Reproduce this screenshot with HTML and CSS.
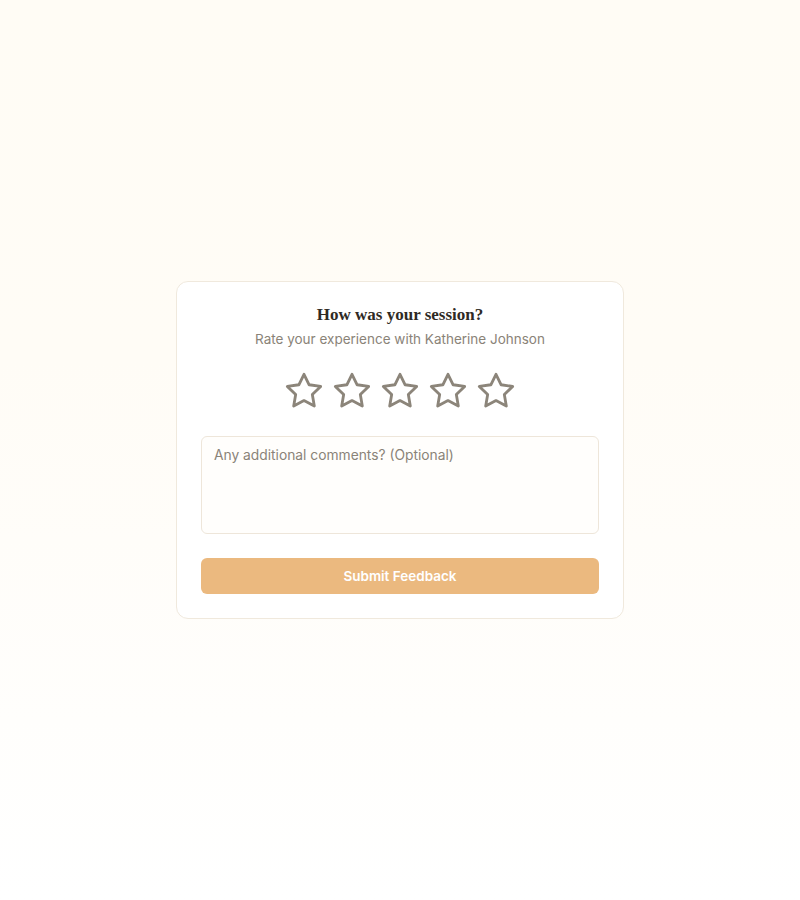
FILE: index.html
```html
<!DOCTYPE html>
<html lang="en">
<head>
<meta charset="utf-8">
<title>Feedback</title>
<link rel="stylesheet" href="styles.css">
</head>
<body>
<main class="page">
  <section class="card">
    <h1 class="title">How was your session?</h1>
    <p class="subtitle">Rate your experience with Katherine Johnson</p>
    <div class="stars">
      <button class="star" type="button" aria-label="1 star"><svg viewBox="0 0 24 24" width="40" height="40"><polygon points="12 2 15.09 8.26 22 9.27 17 14.14 18.18 21.02 12 17.77 5.82 21.02 7 14.14 2 9.27 8.91 8.26 12 2"/></svg></button>
      <button class="star" type="button" aria-label="2 stars"><svg viewBox="0 0 24 24" width="40" height="40"><polygon points="12 2 15.09 8.26 22 9.27 17 14.14 18.18 21.02 12 17.77 5.82 21.02 7 14.14 2 9.27 8.91 8.26 12 2"/></svg></button>
      <button class="star" type="button" aria-label="3 stars"><svg viewBox="0 0 24 24" width="40" height="40"><polygon points="12 2 15.09 8.26 22 9.27 17 14.14 18.18 21.02 12 17.77 5.82 21.02 7 14.14 2 9.27 8.91 8.26 12 2"/></svg></button>
      <button class="star" type="button" aria-label="4 stars"><svg viewBox="0 0 24 24" width="40" height="40"><polygon points="12 2 15.09 8.26 22 9.27 17 14.14 18.18 21.02 12 17.77 5.82 21.02 7 14.14 2 9.27 8.91 8.26 12 2"/></svg></button>
      <button class="star" type="button" aria-label="5 stars"><svg viewBox="0 0 24 24" width="40" height="40"><polygon points="12 2 15.09 8.26 22 9.27 17 14.14 18.18 21.02 12 17.77 5.82 21.02 7 14.14 2 9.27 8.91 8.26 12 2"/></svg></button>
    </div>
    <textarea class="comments" placeholder="Any additional comments? (Optional)"></textarea>
    <button class="submit" type="button">Submit Feedback</button>
  </section>
</main>
</body>
</html>
```
FILE: styles.css
```css
* { box-sizing: border-box; }
html, body { margin: 0; padding: 0; }
body {
  background: linear-gradient(180deg, #fffcf5 0%, #fffcf6 40%, #ffffff 100%);
  min-height: 100vh;
  font-family: "Inter", "DejaVu Sans", sans-serif;
  color: #3a352e;
}
.page {
  min-height: 100vh;
  display: flex;
  align-items: center;
  justify-content: center;
}
.card {
  width: 448px;
  background: #ffffff;
  border: 1px solid #f0e9dd;
  border-radius: 12px;
  padding: 23px 24px 24px;
  display: flex;
  flex-direction: column;
  align-items: stretch;
}
.title {
  margin: 0;
  font-family: "Liberation Serif", "DejaVu Serif", serif;
  font-weight: 700;
  font-size: 17px;
  line-height: 20px;
  text-align: center;
  color: #2f2a24;
}
.subtitle {
  margin: 4px 0 0;
  font-size: 13.5px;
  line-height: 20px;
  text-align: center;
  color: #8a8378;
}
.stars {
  margin-top: 18px;
  display: flex;
  justify-content: center;
}
.star {
  width: 48px;
  height: 48px;
  padding: 4px;
  border: 0;
  background: none;
  cursor: pointer;
  display: flex;
  align-items: center;
  justify-content: center;
}
.star svg {
  display: block;
  fill: none;
  stroke: #8c857a;
  stroke-width: 1.7;
  stroke-linejoin: round;
  stroke-linecap: round;
}
.comments {
  margin-top: 21px;
  width: 100%;
  height: 98px;
  padding: 8px 12px;
  border: 1px solid #eee6da;
  border-radius: 6px;
  background: #fffefc;
  font-family: inherit;
  font-size: 13.8px;
  line-height: 20px;
  color: #3a352e;
  resize: none;
  outline: none;
}
.comments::placeholder { color: #8a8378; }
.submit {
  margin-top: 24px;
  height: 36px;
  width: 100%;
  border: 0;
  border-radius: 6px;
  background: #ebb97f;
  color: #ffffff;
  font-family: inherit;
  font-weight: 600;
  font-size: 13.5px;
  cursor: pointer;
}
```
